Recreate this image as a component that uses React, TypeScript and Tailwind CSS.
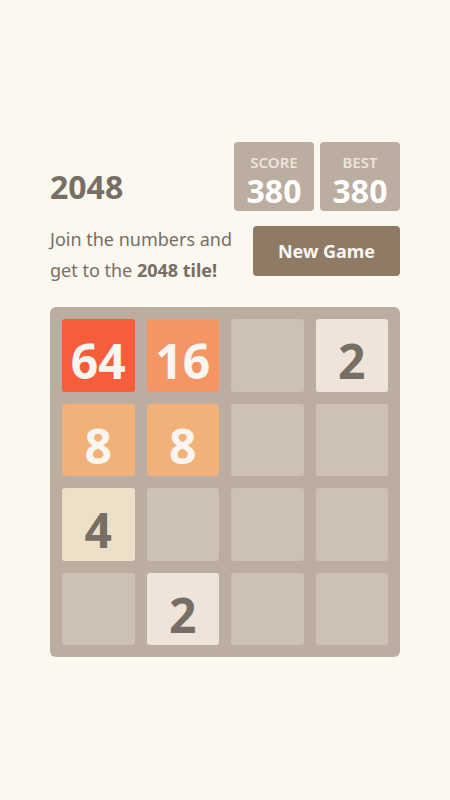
import React from 'react';

const board = [
  [64, 16, 0, 2],
  [8, 8, 0, 0],
  [4, 0, 0, 0],
  [0, 2, 0, 0],
];

const tileClass: Record<number, string> = {
  0: 'bg-[#cdc1b4]',
  2: 'bg-[#eee4da] text-[#776e65]',
  4: 'bg-[#ede0c8] text-[#776e65]',
  8: 'bg-[#f2b179] text-[#f9f6f2]',
  16: 'bg-[#f59563] text-[#f9f6f2]',
  64: 'bg-[#f65e3b] text-[#f9f6f2]',
};

function ScoreBox({ label, value }: { label: string; value: number }) {
  return (
    <div className="w-[80px] h-[69px] rounded-[4px] bg-[#bbada0] flex flex-col items-center">
      <div className="text-[15px] leading-none font-semibold text-[#eee4da] mt-[13px]">{label}</div>
      <div className="text-[32px] leading-none font-bold text-white mt-[5px]">{value}</div>
    </div>
  );
}

export default function App() {
  return (
    <div className="min-h-screen w-full bg-[#faf8ef] font-['Noto_Sans',sans-serif] text-[#776e65]">
      <div className="px-[50px] pt-[142px]">
        {/* ヘッダー */}
        <div className="flex items-center justify-between">
          <h1 className="text-[32px] font-bold leading-none pt-[20px]">2048</h1>
          <div className="flex gap-[6px]">
            <ScoreBox label="SCORE" value={380} />
            <ScoreBox label="BEST" value={380} />
          </div>
        </div>

        <div className="flex items-start justify-between mt-[15px]">
          <p className="text-[18px] leading-[31px] -mt-[2px]">
            Join the numbers and
            <br />
            get to the <b>2048 tile!</b>
          </p>
          <button className="w-[147px] h-[50px] rounded-[4px] bg-[#8f7a66] text-[#f9f6f2] text-[18px] font-bold">
            New Game
          </button>
        </div>

        {/* 盤面 */}
        <div className="mt-[21px] w-[350px] h-[350px] rounded-[6px] bg-[#bbada0] p-[12px] grid grid-cols-4 grid-rows-4 gap-[12px]">
          {board.flat().map((v, i) => (
            <div
              key={i}
              className={`rounded-[3px] flex items-center justify-center text-[48px] font-bold leading-none pt-[12px] ${tileClass[v]}`}
            >
              {v > 0 ? v : ''}
            </div>
          ))}
        </div>
      </div>
    </div>
  );
}
